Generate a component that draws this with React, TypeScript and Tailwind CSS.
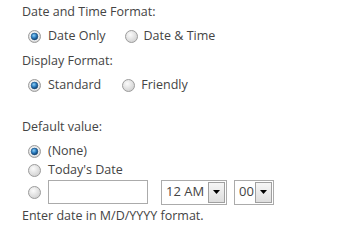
import React from 'react';

const Radio: React.FC<{ checked?: boolean }> = ({ checked }) => (
  <svg width="13" height="13" viewBox="0 0 13 13" className="shrink-0">
    <defs>
      <radialGradient id="rOff" cx="40%" cy="35%" r="70%">
        <stop offset="0%" stopColor="#fbfbfb" />
        <stop offset="100%" stopColor="#cfcfcf" />
      </radialGradient>
      <radialGradient id="rOn" cx="40%" cy="35%" r="65%">
        <stop offset="0%" stopColor="#8fd0f5" />
        <stop offset="55%" stopColor="#2a7cc0" />
        <stop offset="100%" stopColor="#123f6b" />
      </radialGradient>
    </defs>
    <circle cx="6.5" cy="6.5" r="6" fill="url(#rOff)" stroke="#9c9c9c" strokeWidth="1" />
    {checked && (
      <>
        <circle cx="6.5" cy="6.5" r="4.6" fill="#f4f4f4" />
        <circle cx="6.5" cy="6.5" r="3.4" fill="url(#rOn)" stroke="#1d4f7d" strokeWidth="0.6" />
      </>
    )}
  </svg>
);

const Select: React.FC<{ value: string; width: string }> = ({ value, width }) => (
  <div className={`flex h-[25px] items-center border border-[#ababab] bg-white ${width}`}>
    <span className="flex-1 pl-[4px] text-[13px] text-[#444]">{value}</span>
    <div className="mr-[1px] flex h-[21px] w-[17px] items-center justify-center border border-[#a0a0a0] bg-gradient-to-b from-[#f6f6f6] to-[#dedede]">
      <svg width="7" height="4" viewBox="0 0 7 4">
        <path d="M0 0h7L3.5 4z" fill="#000" />
      </svg>
    </div>
  </div>
);

export default function App() {
  return (
    <div
      className="h-[229px] w-[345px] bg-white pl-[22px] text-[12.5px] text-[#444]"
      style={{ fontFamily: '"Open Sans", "Noto Sans", sans-serif' }}
    >
      <div className="h-[24px] leading-[24px]">Date and Time Format:</div>
      <div className="flex h-[24px] items-center pl-[6px]">
        <Radio checked />
        <span className="ml-[7px]">Date Only</span>
        <span className="ml-[19px]"><Radio /></span>
        <span className="ml-[6px]">Date &amp; Time</span>
      </div>
      <div className="mt-[1px] h-[24px] leading-[24px]">Display Format:</div>
      <div className="flex h-[24px] items-center pl-[6px]">
        <Radio checked />
        <span className="ml-[7px]">Standard</span>
        <span className="ml-[21px]"><Radio /></span>
        <span className="ml-[6px]">Friendly</span>
      </div>
      <div className="mt-[18px] h-[24px] leading-[24px]">Default value:</div>
      <div className="mt-[2px] flex h-[20px] items-center pl-[6px]">
        <Radio checked />
        <span className="ml-[7px]">(None)</span>
      </div>
      <div className="flex h-[19px] items-center pl-[6px]">
        <Radio />
        <span className="ml-[7px]">Today's Date</span>
      </div>
      <div className="flex h-[24px] items-center pl-[6px]">
        <Radio />
        <div className="ml-[7px] h-[24px] w-[100px] border border-[#ababab] bg-white" />
        <div className="ml-[13px]">
          <Select value="12 AM" width="w-[66px]" />
        </div>
        <div className="ml-[7px]">
          <Select value="00" width="w-[40px]" />
        </div>
      </div>
      <div className="h-[24px] leading-[24px]">Enter date in M/D/YYYY format.</div>
    </div>
  );
}
